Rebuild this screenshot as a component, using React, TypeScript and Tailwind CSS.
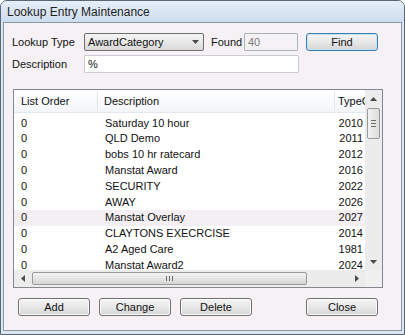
import type { ReactNode } from 'react'

const rows: [string, string, string][] = [
  ['0', 'Saturday 10 hour', '2010'],
  ['0', 'QLD Demo', '2011'],
  ['0', 'bobs 10 hr ratecard', '2012'],
  ['0', 'Manstat Award', '2016'],
  ['0', 'SECURITY', '2022'],
  ['0', 'AWAY', '2026'],
  ['0', 'Manstat Overlay', '2027'],
  ['0', 'CLAYTONS EXECRCISE', '2014'],
  ['0', 'A2 Aged Care', '1981'],
  ['0', 'Manstat Award2', '2024'],
]

function Arrow({ dir }: { dir: 'up' | 'down' | 'left' | 'right' }) {
  const pts = {
    up: '0,4 7,4 3.5,0',
    down: '0,0 7,0 3.5,4',
    left: '4,0 4,7 0,3.5',
    right: '0,0 0,7 4,3.5',
  }[dir]
  const vertical = dir === 'up' || dir === 'down'
  return (
    <svg width={vertical ? 7 : 4} height={vertical ? 4 : 7} viewBox={vertical ? '0 0 7 4' : '0 0 4 7'}>
      <polygon points={pts} fill="#4a4a4a" />
    </svg>
  )
}

function Button({ children, className = '', focused = false }: { children: ReactNode; className?: string; focused?: boolean }) {
  return (
    <div
      className={`flex h-[18px] w-[72px] items-center justify-center rounded-[3px] border bg-linear-to-b from-[#f4f4f4] via-[#e8e8e8] to-[#d6d6d6] text-[11px] text-[#111] ${
        focused ? 'border-[#3c7fb1] shadow-[inset_0_0_0_1px_#c4e3f7]' : 'border-[#707070] shadow-[inset_0_0_0_1px_#fbfbfb]'
      } ${className}`}
    >
      {children}
    </div>
  )
}

export default function App() {
  return (
    <div className="h-[335px] w-[405px] overflow-hidden bg-white font-['Liberation_Sans',Arial,sans-serif] text-[11px] text-[#111]">
      <div className="flex h-full flex-col rounded-t-[7px] border border-[#5b6776] bg-[#dce6f1]">
        <div className="flex h-[21px] shrink-0 items-center rounded-t-[6px] bg-linear-to-b from-[#e6eef8] to-[#cddcee] pl-[6px] text-[12px] text-[#1f1f1f]">
          Lookup Entry Maintenance
        </div>
        <div className="mx-[2px] mb-[3px] flex-1 border border-[#8a97a8] bg-[#f5f1f5] pl-[8px] pt-[10px]">
          {/* top row */}
          <div className="flex h-[18px] items-center">
            <span className="w-[72px]">Lookup Type</span>
            <div className="flex h-[18px] w-[120px] items-center justify-between rounded-[2px] border border-[#707070] bg-linear-to-b from-[#f4f4f4] via-[#e8e8e8] to-[#d8d8d8] pl-[3px] pr-[4px]">
              <span>AwardCategory</span>
              <Arrow dir="down" />
            </div>
            <span className="ml-[7px] w-[33px]">Found</span>
            <div className="flex h-[18px] w-[54px] items-center rounded-[1px] border border-[#adb2b5] bg-[#f5f2f5] pl-[3px] text-[#7a7a7a]">
              40
            </div>
            <Button className="ml-[8px]" focused>
              Find
            </Button>
          </div>

          <div className="mt-[4px] flex h-[18px] items-center">
            <span className="w-[72px]">Description</span>
            <div className="flex h-[18px] w-[215px] items-center rounded-[1px] border border-[#c9ccd3] bg-white pl-[3px]">%</div>
          </div>

          {/* list view */}
          <div className="ml-[1px] mt-[16px] flex h-[199px] w-[370px] flex-col border border-[#828790] bg-white">
            <div className="flex h-[180px]">
              <div className="flex-1 overflow-hidden">
                <div className="flex h-[23px] items-center border-b border-[#e5e8ee] bg-linear-to-b from-white to-[#f3f5f8]">
                  <div className="w-[84px] border-r border-[#e3e6eb] pl-[7px] leading-[20px]">List Order</div>
                  <div className="w-[237px] border-r border-[#e3e6eb] pl-[6px] leading-[20px]">Description</div>
                  <div className="flex-1 overflow-hidden whitespace-nowrap pl-[3px]">TypeCode</div>
                </div>
                <div className="pt-[2px]">
                  {rows.map((r, i) => (
                    <div key={i} className={`flex h-[15.8px] items-center ${i === 6 ? 'bg-[#f3eff3]' : ''}`}>
                      <div className="w-[84px] pl-[7px]">{r[0]}</div>
                      <div className="w-[237px] whitespace-nowrap pl-[7px]">{r[1]}</div>
                      <div className="flex-1 pr-[2px] text-right">{r[2]}</div>
                    </div>
                  ))}
                </div>
              </div>
              {/* vertical scrollbar */}
              <div className="flex w-[17px] flex-col bg-[#ececec]">
                <div className="flex h-[17px] items-center justify-center">
                  <Arrow dir="up" />
                </div>
                <div className="mx-[2px] mt-[1px] flex h-[31px] flex-col items-center justify-center gap-[2px] rounded-[2px] border border-[#9a9a9a] bg-linear-to-r from-[#f3f3f3] to-[#dcdcdc]">
                  <div className="h-px w-[5px] bg-[#6b6b6b]" />
                  <div className="h-px w-[5px] bg-[#6b6b6b]" />
                  <div className="h-px w-[5px] bg-[#6b6b6b]" />
                </div>
                <div className="flex-1" />
                <div className="flex h-[17px] items-center justify-center">
                  <Arrow dir="down" />
                </div>
              </div>
            </div>
            {/* horizontal scrollbar */}
            <div className="flex h-[17px]">
              <div className="flex flex-1 items-center bg-[#ececec]">
                <div className="flex h-[17px] w-[17px] items-center justify-center">
                  <Arrow dir="left" />
                </div>
                <div className="ml-[1px] flex h-[13px] w-[275px] items-center justify-center gap-[2px] rounded-[2px] border border-[#9a9a9a] bg-linear-to-b from-[#f3f3f3] to-[#d6d6d6]">
                  <div className="h-[5px] w-px bg-[#6b6b6b]" />
                  <div className="h-[5px] w-px bg-[#6b6b6b]" />
                  <div className="h-[5px] w-px bg-[#6b6b6b]" />
                </div>
                <div className="flex-1" />
                <div className="flex h-[17px] w-[17px] items-center justify-center">
                  <Arrow dir="right" />
                </div>
              </div>
              <div className="w-[17px] bg-[#f0f0f0]" />
            </div>
          </div>

          {/* buttons */}
          <div className="ml-[6px] mt-[10px] flex gap-[9px]">
            <Button>Add</Button>
            <Button>Change</Button>
            <Button>Delete</Button>
            <Button className="ml-[45px]">Close</Button>
          </div>
        </div>
      </div>
    </div>
  )
}
